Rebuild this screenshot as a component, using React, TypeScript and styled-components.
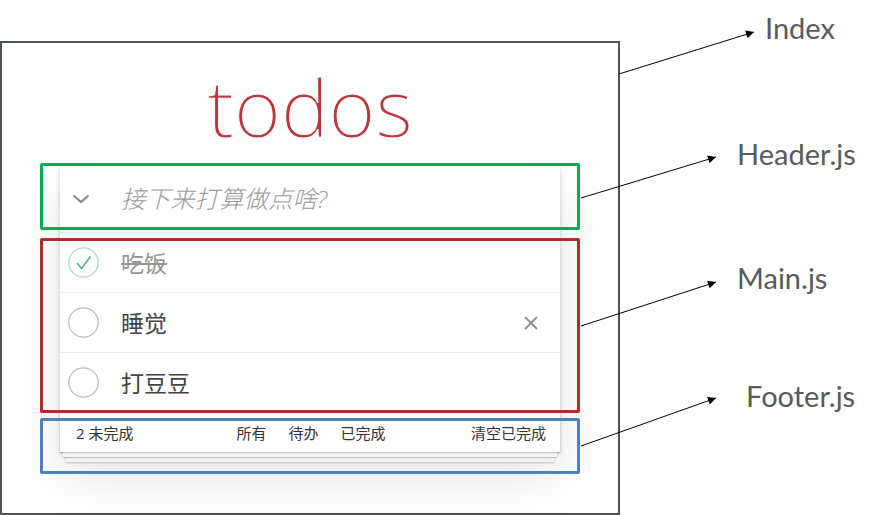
import React from "react";
import styled, { createGlobalStyle } from "styled-components";

const GlobalStyle = createGlobalStyle`
  html, body { margin: 0; padding: 0; background: #ffffff; }
  body { font-family: "Open Sans", "Noto Sans CJK SC", sans-serif; }
`;

const Page = styled.div`
  position: relative;
  width: 882px;
  height: 515px;
  display: flex;
  align-items: flex-start;
  overflow: hidden;
`;

const Frame = styled.section`
  box-sizing: border-box;
  margin-top: 41px;
  width: 620px;
  height: 474px;
  border: 2px solid #4d5252;
  display: flex;
  flex-direction: column;
  align-items: center;
  padding-top: 23px;
`;

const Title = styled.h1`
  margin: 0;
  font-family: "Open Sans", sans-serif;
  font-weight: 300;
  font-size: 80px;
  line-height: 80px;
  color: #b8383e;
  -webkit-text-stroke: 1px #ffffff;
`;

const Card = styled.div`
  position: relative;
  margin-top: 20px;
  width: 500px;
  background: #ffffff;
  box-shadow: 0 2px 4px rgba(0, 0, 0, 0.2), 0 25px 50px rgba(0, 0, 0, 0.1);
  font-family: "Open Sans", "Noto Sans CJK SC", sans-serif;
`;

const Section = styled.div`
  position: relative;
`;

const Outline = styled.div<{ $color: string; $top: number; $bottom: number }>`
  position: absolute;
  left: -20px;
  right: -20px;
  top: ${(p) => p.$top}px;
  bottom: ${(p) => p.$bottom}px;
  border: 3px solid ${(p) => p.$color};
  border-radius: 2px;
  pointer-events: none;
  z-index: 3;
`;

const HeaderRow = styled.div`
  height: 66px;
  display: flex;
  align-items: center;
  box-shadow: inset 0 -2px 1px rgba(0, 0, 0, 0.03);
`;

const ToggleAll = styled.div`
  width: 61px;
  padding-left: 12px;
  box-sizing: border-box;
  display: flex;
  align-items: center;
`;

const NewTodo = styled.div`
  font-size: 24.5px;
  font-style: italic;
  font-weight: 300;
  color: #9a9a9a;
  line-height: 30px;
`;

const List = styled.ul`
  margin: 0;
  padding: 0;
  list-style: none;
  border-top: 1px solid #e6e6e6;
`;

const Item = styled.li`
  height: 59px;
  display: flex;
  align-items: center;
  padding: 0 22px 0 8px;
  border-bottom: 1px solid #ededed;
  &:last-child {
    border-bottom: none;
  }
`;

const ItemText = styled.span<{ $done?: boolean }>`
  flex: 1;
  margin-left: 22px;
  font-size: 23px;
  line-height: 30px;
  color: ${(p) => (p.$done ? "#949494" : "#444444")};
  text-decoration: ${(p) => (p.$done ? "line-through" : "none")};
`;

const Footer = styled.div`
  position: relative;
  height: 40px;
  box-sizing: border-box;
  border-top: 1px solid #e6e6e6;
  padding: 0 14px 0 16px;
  display: grid;
  grid-template-columns: 1fr auto 1fr;
  align-items: center;
  font-size: 15px;
  color: #333333;
  &::before {
    content: "";
    position: absolute;
    left: 0;
    right: 0;
    bottom: 0;
    height: 40px;
    box-shadow: 0 1px 1px rgba(0, 0, 0, 0.2), 0 8px 0 -3px #f6f6f6,
      0 9px 1px -3px rgba(0, 0, 0, 0.2), 0 16px 0 -6px #f6f6f6,
      0 17px 2px -6px rgba(0, 0, 0, 0.2);
    pointer-events: none;
  }
`;

const Count = styled.span`
  position: relative;
  justify-self: start;
`;

const Filters = styled.div`
  position: relative;
  display: flex;
  gap: 22px;
`;

const Filter = styled.span``;

const Clear = styled.span`
  position: relative;
  justify-self: end;
`;

const Labels = styled.div`
  display: flex;
  flex-direction: column;
  align-items: flex-start;
`;

const Label = styled.div<{ $indent: number; $gap: number }>`
  margin-left: ${(p) => p.$indent}px;
  margin-top: ${(p) => p.$gap}px;
  font-family: "Lato", "Open Sans", sans-serif;
  font-size: 29px;
  line-height: 36px;
  color: #5a5a5a;
`;

const Arrows = styled.svg`
  position: absolute;
  left: 0;
  top: 0;
  pointer-events: none;
`;

const Chevron = () => (
  <svg width="18" height="10" viewBox="0 0 18 10">
    <polyline points="1.5,1.5 9,8 16.5,1.5" fill="none" stroke="#8a8a8a" strokeWidth="2.2" />
  </svg>
);

const Check = ({ done }: { done?: boolean }) => (
  <svg width="31" height="31" viewBox="0 0 31 31">
    <circle cx="15.5" cy="15.5" r="14.7" fill="none" stroke={done ? "#b3d8d0" : "#bdbdbd"} strokeWidth="1.3" />
    {done && <polyline points="9,16 13.5,21.5 22.5,9.5" fill="none" stroke="#4fb19e" strokeWidth="1.6" />}
  </svg>
);

const Destroy = () => (
  <svg width="14" height="14" viewBox="0 0 14 14">
    <path d="M1 1 L13 13 M13 1 L1 13" stroke="#8e8e8e" strokeWidth="1.8" />
  </svg>
);

const todos = [
  { text: "吃饭", done: true, hover: false },
  { text: "睡觉", done: false, hover: true },
  { text: "打豆豆", done: false, hover: false },
];

const arrows = [
  [619, 74, 754, 32],
  [581, 198, 716, 157],
  [581, 326, 716, 282],
  [581, 446, 716, 398],
];

export default function App() {
  return (
    <>
      <GlobalStyle />
      <Page>
        <Frame>
          <Title>todos</Title>
          <Card>
            <Section>
              <HeaderRow>
                <ToggleAll>
                  <Chevron />
                </ToggleAll>
                <NewTodo>接下来打算做点啥?</NewTodo>
              </HeaderRow>
              <Outline $color="#00b050" $top={-3} $bottom={2} />
            </Section>
            <Section>
              <List>
                {todos.map((t) => (
                  <Item key={t.text}>
                    <Check done={t.done} />
                    <ItemText $done={t.done}>{t.text}</ItemText>
                    {t.hover && <Destroy />}
                  </Item>
                ))}
              </List>
              <Outline $color="#b22b2b" $top={6} $bottom={-1} />
            </Section>
            <Section>
              <Footer>
                <Count>2 未完成</Count>
                <Filters>
                  <Filter>所有</Filter>
                  <Filter>待办</Filter>
                  <Filter>已完成</Filter>
                </Filters>
                <Clear>清空已完成</Clear>
              </Footer>
              <Outline $color="#4f81bd" $top={6} $bottom={-22} />
            </Section>
          </Card>
        </Frame>
        <Labels>
          <Label $indent={145} $gap={10}>Index</Label>
          <Label $indent={117} $gap={90}>Header.js</Label>
          <Label $indent={117} $gap={88}>Main.js</Label>
          <Label $indent={126} $gap={82}>Footer.js</Label>
        </Labels>
        <Arrows width="882" height="515" viewBox="0 0 882 515">
          <defs>
            <marker id="head" viewBox="0 0 10 10" refX="10" refY="5" markerWidth="10" markerHeight="8" markerUnits="userSpaceOnUse" orient="auto">
              <path d="M0 0 L10 5 L0 10 Z" fill="#000" />
            </marker>
          </defs>
          {arrows.map(([x1, y1, x2, y2], i) => (
            <line key={i} x1={x1} y1={y1} x2={x2} y2={y2} stroke="#000" strokeWidth="1" markerEnd="url(#head)" />
          ))}
        </Arrows>
      </Page>
    </>
  );
}
